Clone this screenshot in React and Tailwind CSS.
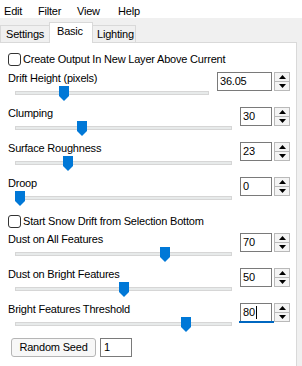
import React from "react";

function Thumb({ frac }) {
  return (
    <svg
      width="10"
      height="15"
      viewBox="0 0 10 15"
      className="absolute top-0"
      style={{ left: `calc((100% - 10px) * ${frac})` }}
    >
      <path d="M0 0 H10 V10 L5 15 L0 10 Z" fill="#0078d7" />
    </svg>
  );
}

function Spin() {
  return (
    <div className="ml-[2px] mt-[2px] flex h-[19px] w-[16px] flex-col border border-[#b9b9b9] bg-[#e9e9e9]">
      <div className="flex h-[9px] items-center justify-center border-b border-[#b9b9b9] bg-[#f4f4f4]">
        <svg width="7" height="4" viewBox="0 0 7 4">
          <path d="M3.5 0 L7 4 H0 Z" fill="#000" />
        </svg>
      </div>
      <div className="flex flex-1 items-center justify-center bg-[#f4f4f4]">
        <svg width="7" height="4" viewBox="0 0 7 4">
          <path d="M0 0 H7 L3.5 4 Z" fill="#000" />
        </svg>
      </div>
    </div>
  );
}

function SliderRow({ label, value, frac, wide, focused }) {
  return (
    <div className="flex h-[35px] items-start">
      <div className="flex min-w-0 flex-1 flex-col pr-[8px]">
        <div className="h-[16px] whitespace-nowrap leading-[16px]">{label}</div>
        <div className="relative ml-[7px] h-[15px]">
          <div className="absolute left-0 right-0 top-[5px] h-[4px] border border-[#d6d6d6] bg-[#e7eaea]" />
          <Thumb frac={frac} />
        </div>
      </div>
      <div
        className={`relative mt-[2px] flex h-[19px] items-center border border-[#7a7a7a] bg-white pl-[2px] leading-[17px] ${
          wide ? "w-[55px]" : "w-[32px]"
        }`}
      >
        <span>{value}</span>
        {focused && <span className="ml-[1px] h-[13px] w-[1px] bg-black" />}
        {focused && (
          <div className="absolute bottom-[-2px] left-[-2px] right-[-3px] h-[2px] bg-[#0067c0]" />
        )}
      </div>
      <Spin />
    </div>
  );
}

function CheckRow({ label }) {
  return (
    <div className="flex h-[16px] items-center">
      <div className="h-[13px] w-[13px] rounded-[3px] border border-[#333333] bg-white" />
      <span className="ml-[2px] whitespace-nowrap leading-[16px]">{label}</span>
    </div>
  );
}

export default function App() {
  return (
    <div className="h-[366px] w-[302px] overflow-hidden bg-[#f0f0f0] font-['Liberation_Sans',Arial,sans-serif] text-[11px] tracking-[-0.2px] text-black">
      {/* menu */}
      <div className="flex h-[18px] bg-white pl-[4px] leading-[22px]">
        <span className="w-[34px]">Edit</span>
        <span className="w-[39px]">Filter</span>
        <span className="w-[41px]">View</span>
        <span>Help</span>
      </div>
      {/* tabs */}
      <div className="flex h-[24px] items-end">
        <div className="h-[17px] w-[49px] border-l border-t border-[#d9d9d9] pl-[5px] leading-[17px]">
          Settings
        </div>
        <div className="relative z-10 mb-[-1px] h-[21px] w-[44px] border-x border-t border-[#d9d9d9] bg-white pl-[7px] leading-[17px]">
          Basic
        </div>
        <div className="h-[17px] w-[43px] border-r border-t border-[#d9d9d9] pl-[4px] leading-[17px]">
          Lighting
        </div>
      </div>
      {/* panel */}
      <div className="h-[400px] w-[297px] border-r border-t border-[#d9d9d9] bg-white pl-[8px] pr-[6px] pt-[8px]">
        <CheckRow label="Create Output In New Layer Above Current" />
        <div className="mt-[3px]">
          <SliderRow label="Drift Height (pixels)" value="36.05" frac={36.05 / 150} wide />
          <SliderRow label="Clumping" value="30" frac={0.3} />
          <SliderRow label="Surface Roughness" value="23" frac={0.23} />
          <SliderRow label="Droop" value="0" frac={0} />
        </div>
        <div className="mt-[3px]">
          <CheckRow label="Start Snow Drift from Selection Bottom" />
        </div>
        <div className="mt-[2px]">
          <SliderRow label="Dust on All Features" value="70" frac={0.7} />
          <SliderRow label="Dust on Bright Features" value="50" frac={0.5} />
          <SliderRow label="Bright Features Threshold" value="80" frac={0.8} focused />
        </div>
        <div className="mt-[2px] flex items-center">
          <button className="ml-[3px] h-[19px] w-[85px] rounded-[3px] border border-[#b5b5b5] bg-[#f7f7f7] text-center leading-[17px] tracking-[-0.2px]">
            Random Seed
          </button>
          <div className="ml-[4px] flex h-[19px] w-[32px] items-center border border-[#7a7a7a] bg-white pl-[3px] leading-[17px]">
            1
          </div>
        </div>
      </div>
    </div>
  );
}
